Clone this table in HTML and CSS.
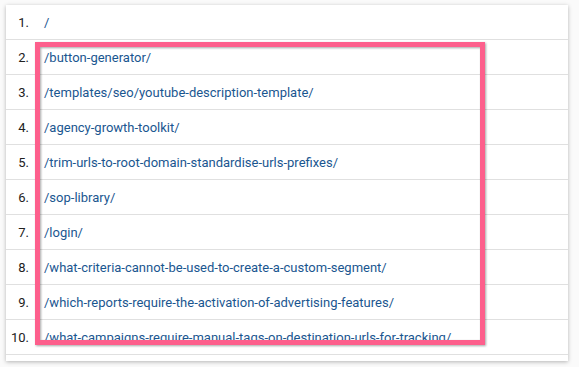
FILE: index.html
```html
<!DOCTYPE html>
<html>
<head>
<meta charset="utf-8">
<link rel="stylesheet" href="styles.css">
</head>
<body>
<div class="page">
  <div class="card">
    <div class="row"><span class="num">1.</span><span class="path">/</span></div>
    <div class="row"><span class="num">2.</span><span class="path">/button-generator/</span></div>
    <div class="row"><span class="num">3.</span><span class="path">/templates/seo/youtube-description-template/</span></div>
    <div class="row"><span class="num">4.</span><span class="path">/agency-growth-toolkit/</span></div>
    <div class="row"><span class="num">5.</span><span class="path">/trim-urls-to-root-domain-standardise-urls-prefixes/</span></div>
    <div class="row"><span class="num">6.</span><span class="path">/sop-library/</span></div>
    <div class="row"><span class="num">7.</span><span class="path">/login/</span></div>
    <div class="row"><span class="num">8.</span><span class="path">/what-criteria-cannot-be-used-to-create-a-custom-segment/</span></div>
    <div class="row"><span class="num">9.</span><span class="path">/which-reports-require-the-activation-of-advertising-features/</span></div>
    <div class="row"><span class="num">10.</span><span class="path">/what-campaigns-require-manual-tags-on-destination-urls-for-tracking/</span></div>
    <div class="highlight"></div>
  </div>
</div>
</body>
</html>
```
FILE: styles.css
```css
html, body {
  margin: 0;
  padding: 0;
  background: #fafafa;
}
.page {
  padding: 5px 11px 6px 6px;
}
.card {
  position: relative;
  width: 562px;
  height: 356px;
  box-sizing: border-box;
  background: #ffffff;
  box-shadow: 0 1px 4px rgba(0,0,0,0.28);
  font-family: Roboto, "Liberation Sans", sans-serif;
  font-size: 13px;
}
.row {
  display: flex;
  align-items: center;
  height: 34px;
  border-bottom: 1px solid #e0e0e0;
}
.num {
  width: 23px;
  text-align: right;
  color: #212121;
  flex: none;
}
.path {
  margin-left: 15px;
  color: #1a5690;
  white-space: nowrap;
}
.highlight {
  position: absolute;
  left: 29px;
  top: 37px;
  width: 450px;
  height: 303px;
  box-sizing: border-box;
  border: 5px solid #fd5f8c;
  filter: drop-shadow(1px 1px 1px rgba(0,0,0,0.35));
}
```
